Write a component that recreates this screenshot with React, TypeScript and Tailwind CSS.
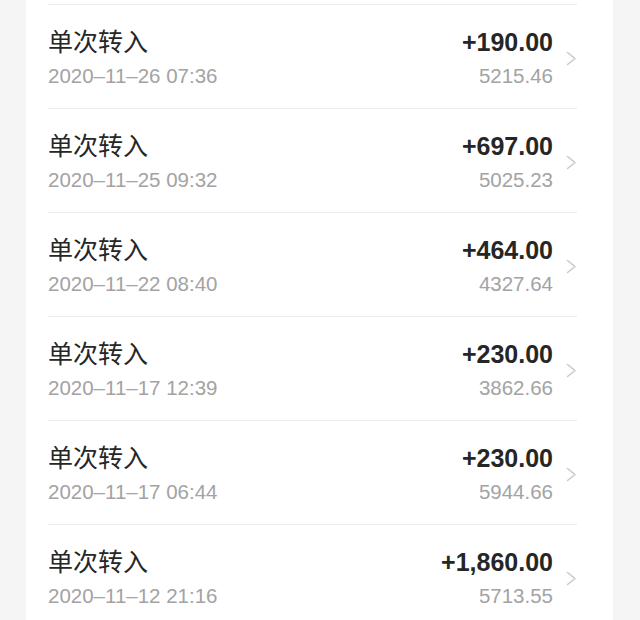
const ROWS = [
  { amount: "+190.00", time: "2020–11–26 07:36", balance: "5215.46" },
  { amount: "+697.00", time: "2020–11–25 09:32", balance: "5025.23" },
  { amount: "+464.00", time: "2020–11–22 08:40", balance: "4327.64" },
  { amount: "+230.00", time: "2020–11–17 12:39", balance: "3862.66" },
  { amount: "+230.00", time: "2020–11–17 06:44", balance: "5944.66" },
  { amount: "+1,860.00", time: "2020–11–12 21:16", balance: "5713.55" },
];

function Chevron() {
  return (
    <svg width="11" height="15" viewBox="0 0 11 15" fill="none" className="shrink-0">
      <polyline points="1.5,1.5 9,7.5 1.5,13.5" stroke="#c9c9c9" strokeWidth="1.6" strokeLinecap="round" strokeLinejoin="round" />
    </svg>
  );
}

export default function App() {
  return (
    <div
      className="h-[620px] w-[640px] overflow-hidden bg-[#f5f5f5]"
      style={{ fontFamily: "'Liberation Sans', 'Noto Sans CJK SC', sans-serif" }}
    >
      <div className="ml-[26px] mr-[27px] bg-white pt-[4px] pl-[22px] pr-[36px]">
        {ROWS.map((r, i) => (
          <div key={i} className="flex h-[104px] items-center border-t border-[#ececec]">
            <div className="flex h-full flex-1 flex-col pt-[21px]">
              <div className="text-[25px] leading-[32px] text-[#262626]">单次转入</div>
              <div className="mt-[5px] text-[20.5px] leading-[26px] text-[#a3a3a3]">{r.time}</div>
            </div>
            <div className="flex h-full flex-col items-end pt-[21px]">
              <div className="text-[25px] font-bold leading-[32px] text-[#262626]">{r.amount}</div>
              <div className="mt-[5px] text-[20.5px] leading-[26px] text-[#a3a3a3]">{r.balance}</div>
            </div>
            <div className="ml-[13px] mt-[4px]">
              <Chevron />
            </div>
          </div>
        ))}
      </div>
    </div>
  );
}
